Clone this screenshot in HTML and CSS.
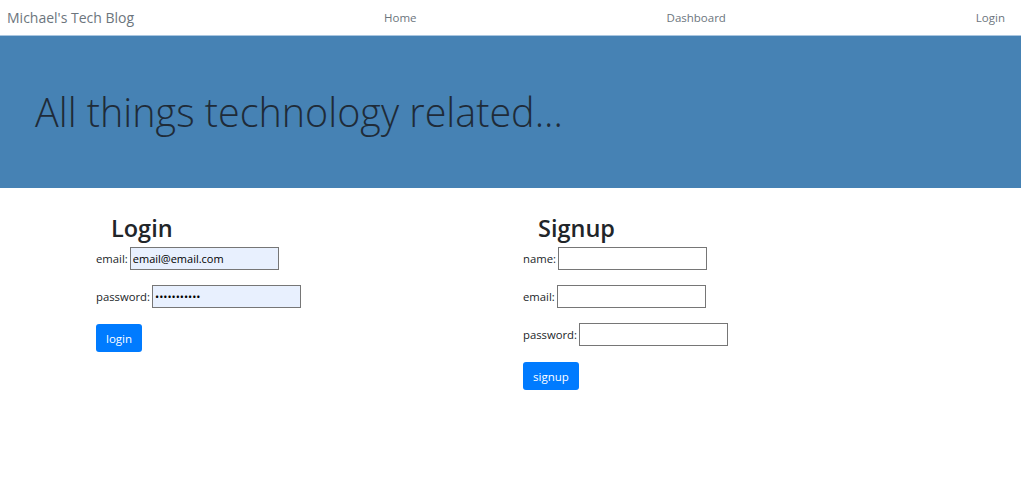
FILE: index.html
```html
<!DOCTYPE html>
<html lang="en">
<head>
<meta charset="utf-8">
<title>Michael's Tech Blog</title>
<link rel="stylesheet" href="styles.css">
</head>
<body>
<nav class="navbar">
  <a class="brand" href="#">Michael's Tech Blog</a>
  <a class="nav-link" href="#">Home</a>
  <a class="nav-link" href="#">Dashboard</a>
  <a class="nav-link" href="#">Login</a>
</nav>
<header class="jumbotron">
  <h1 class="display">All things technology related...</h1>
</header>
<main class="forms">
  <section class="form-col">
    <h2 class="form-title">Login</h2>
    <form class="form">
      <div class="row"><label>email:</label><input class="field autofill" type="text" value="email@email.com"></div>
      <div class="row"><label>password:</label><input class="field autofill" type="password" value="passwordxyz"></div>
      <div class="row btn-row"><button class="btn" type="button">login</button></div>
    </form>
  </section>
  <section class="form-col">
    <h2 class="form-title">Signup</h2>
    <form class="form">
      <div class="row"><label>name:</label><input class="field" type="text"></div>
      <div class="row"><label>email:</label><input class="field" type="text"></div>
      <div class="row"><label>password:</label><input class="field" type="password"></div>
      <div class="row btn-row"><button class="btn" type="button">signup</button></div>
    </form>
  </section>
</main>
</body>
</html>
```
FILE: styles.css
```css
* { box-sizing: border-box; }
body {
  margin: 0;
  font-family: "Open Sans", "Noto Sans", sans-serif;
  color: #212529;
  background: #fff;
}
.navbar {
  height: 36px;
  display: flex;
  align-items: center;
  justify-content: space-between;
  padding: 0 16px 0 7px;
  border-bottom: 1px solid #a9c6e0;
}
.brand {
  font-size: 14px;
  color: #6c757d;
  text-decoration: none;
}
.nav-link {
  font-size: 11.5px;
  color: #6c757d;
  text-decoration: none;
}
.jumbotron {
  background: #4682b4;
  height: 152px;
  display: flex;
  align-items: center;
  padding-left: 35px;
}
.display {
  margin: 0;
  font-size: 39.5px;
  font-weight: 300;
  color: #1f2b38;
}
.forms {
  display: grid;
  grid-template-columns: 427px 427px;
  padding: 26px 0 0 96px;
}
.form-title {
  margin: 0 0 4px 15px;
  font-size: 23.5px;
  font-weight: 600;
  line-height: 29px;
}
.form {
  display: flex;
  flex-direction: column;
  gap: 15px;
}
.row {
  display: flex;
  align-items: center;
  gap: 2px;
  font-size: 11.3px;
}
.btn-row { margin-top: 1px; }
.field {
  width: 149px;
  height: 23px;
  border: 1px solid #767676;
  padding: 1px 2px;
  font-size: 11px;
  font-family: "Open Sans", sans-serif;
  color: #000;
  background: #fff;
}
.autofill { background: #e8f0fe; }
.btn {
  height: 28px;
  padding: 0 10px;
  background: #007bff;
  color: #fff;
  border: none;
  border-radius: 3px;
  font-size: 11.5px;
  font-family: "Open Sans", sans-serif;
}
```
